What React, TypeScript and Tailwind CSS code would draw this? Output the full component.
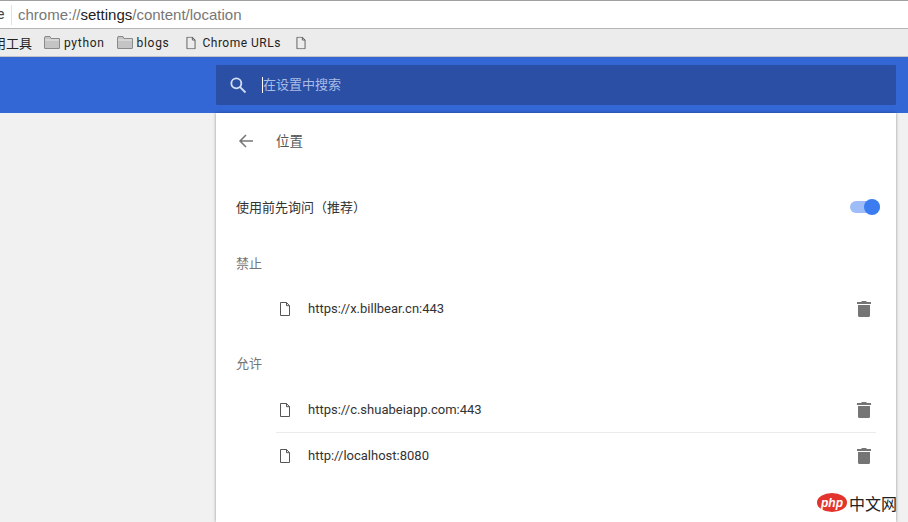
import React from "react";

const sans = "font-['Roboto','Noto_Sans_CJK_SC',sans-serif]";

function PageIcon({ className = "" }: { className?: string }) {
  return (
    <svg width="12" height="14" viewBox="0 0 12 14" fill="none" stroke="#555" strokeWidth="1" className={className}>
      <path d="M1.5 .5H7.5L10.5 3.7V13.5H1.5Z" />
      <path d="M7.5 .5V3.7H10.5" />
    </svg>
  );
}

function FolderIcon() {
  return (
    <svg width="16" height="13" viewBox="0 0 16 13" className="shrink-0">
      <path d="M.5 2V12a.5.5 0 0 0 .5.5H15a.5.5 0 0 0 .5-.5V2.5H7L6 .5H1Z" fill="#c4c4c4" stroke="#8a8a8a" />
      <path d="M1 4H15" stroke="#e8e8e8" />
    </svg>
  );
}

function Trash() {
  return (
    <svg width="14" height="16" viewBox="0 0 14 16" fill="#757575" className="shrink-0">
      <path d="M5 0H9L10 1H14V3H0V1H4Z" />
      <path d="M1 4H13V14.5A1.5 1.5 0 0 1 11.5 16H2.5A1.5 1.5 0 0 1 1 14.5Z" />
    </svg>
  );
}

function SiteRow({ url, className = "h-[46px]" }: { url: string; className?: string }) {
  return (
    <div className={`ml-[60px] mr-5 flex items-center ${className}`}>
      <PageIcon className="ml-[3px] shrink-0" />
      <span className="ml-[17px] text-[13px] text-[#333] flex-1">{url}</span>
      <div className="mr-[5px]"><Trash /></div>
    </div>
  );
}

export default function App() {
  return (
    <div className={`w-[908px] h-[522px] overflow-hidden relative flex flex-col bg-[#f1f1f1] ${sans}`}>
      <div className="h-[29px] shrink-0 bg-white border-t border-t-[#9f9f9f] border-b border-b-[#b5b5b5] flex items-center overflow-hidden">
        <span className="text-[14px] text-[#444] ml-[-3px] w-[14px] shrink-0">e</span>
        <div className="w-px h-[20px] bg-[#e2e2e2] shrink-0" />
        <span className="ml-[6px] pt-px text-[15px] text-[#777] font-['Liberation_Sans',sans-serif]">
          chrome://<span className="text-[#222]">settings</span>/content/location
        </span>
      </div>
      <div className="h-[28px] shrink-0 bg-[#ececec] border-b border-[#c4c4c4] flex items-center overflow-hidden text-[12px] text-[#222]">
        <span className="ml-[-7px] w-[44px] shrink-0 whitespace-nowrap text-[13px] font-['Noto_Sans_CJK_SC',sans-serif]">用工具</span>
        <div className="ml-[7px]"><FolderIcon /></div>
        <span className="ml-[4px] tracking-[0.7px]">python</span>
        <div className="ml-[12px]"><FolderIcon /></div>
        <span className="ml-[4px] tracking-[0.7px]">blogs</span>
        <PageIcon className="ml-[15px] scale-90 shrink-0" />
        <span className="ml-[6px] tracking-[0.5px]">Chrome URLs</span>
        <PageIcon className="ml-[14px] scale-90 shrink-0" />
      </div>
      <div className="h-[56px] shrink-0 bg-[#3367d6] pl-[216px] pr-3 py-2">
        <div className="h-[40px] bg-[#2a4fa5] rounded-[1px] flex items-center">
          <svg width="20" height="20" viewBox="0 0 24 24" fill="none" stroke="#d5dff4" strokeWidth="2.2" className="ml-[12px] shrink-0">
            <circle cx="10" cy="10" r="6" />
            <path d="M14.5 14.5L21 21" />
          </svg>
          <div className="ml-[14px] w-px h-[16px] bg-white shrink-0" />
          <span className="mb-[2px] text-[13px] text-[#a9bce6] font-['Noto_Sans_CJK_SC',sans-serif]">在设置中搜索</span>
        </div>
      </div>
      <div className="flex-1 pl-[216px] pr-3 min-h-0">
        <div className="h-full bg-white shadow-[0_0_3px_rgba(0,0,0,0.4)]">
          <div className="h-[56px] flex items-center pl-[22px]">
            <svg width="16" height="16" viewBox="0 0 16 16" fill="none" stroke="#757575" strokeWidth="1.5">
              <path d="M15 8H2M8 2L2 8L8 14" />
            </svg>
            <span className="ml-[22px] mb-[2px] text-[13.5px] text-[#555] font-['Noto_Sans_CJK_SC',sans-serif]">位置</span>
          </div>
          <div className="mt-[10px] h-[56px] flex items-center pl-5 pr-4">
            <span className="flex-1 text-[13px] text-[#333] font-['Noto_Sans_CJK_SC',sans-serif]">使用前先询问（推荐）</span>
            <div className="relative w-[30px] h-[12px] rounded-full bg-[#9dbcf8]">
              <div className="absolute right-0 top-[-2px] w-[16px] h-[16px] rounded-full bg-[#3b7cf1]" />
            </div>
          </div>
          <div className="mt-[18px] h-[20px] pl-5 flex items-center text-[13px] text-[#757575] font-['Noto_Sans_CJK_SC',sans-serif]">禁止</div>
          <div className="mt-[13px]"><SiteRow url="https://x.billbear.cn:443" /></div>
          <div className="mt-[21px] h-[20px] pl-5 flex items-center text-[13px] text-[#757575] font-['Noto_Sans_CJK_SC',sans-serif]">允许</div>
          <div className="mt-[14px]">
            <SiteRow url="https://c.shuabeiapp.com:443" className="h-[45px]" />
            <SiteRow url="http://localhost:8080" className="h-[46px] border-t border-[#ebebeb]" />
          </div>
        </div>
      </div>
      <div className="absolute left-[817px] top-[493px] flex items-center">
        <div className="w-[30px] h-[19px] rounded-[50%] bg-[#e2342c] flex items-center justify-center text-white text-[12px] font-bold italic leading-none font-['Liberation_Sans',sans-serif]">php</div>
        <span className="ml-[2px] text-[16px] leading-none text-[#222] font-['Noto_Sans_CJK_SC',sans-serif]">中文网</span>
      </div>
    </div>
  );
}
